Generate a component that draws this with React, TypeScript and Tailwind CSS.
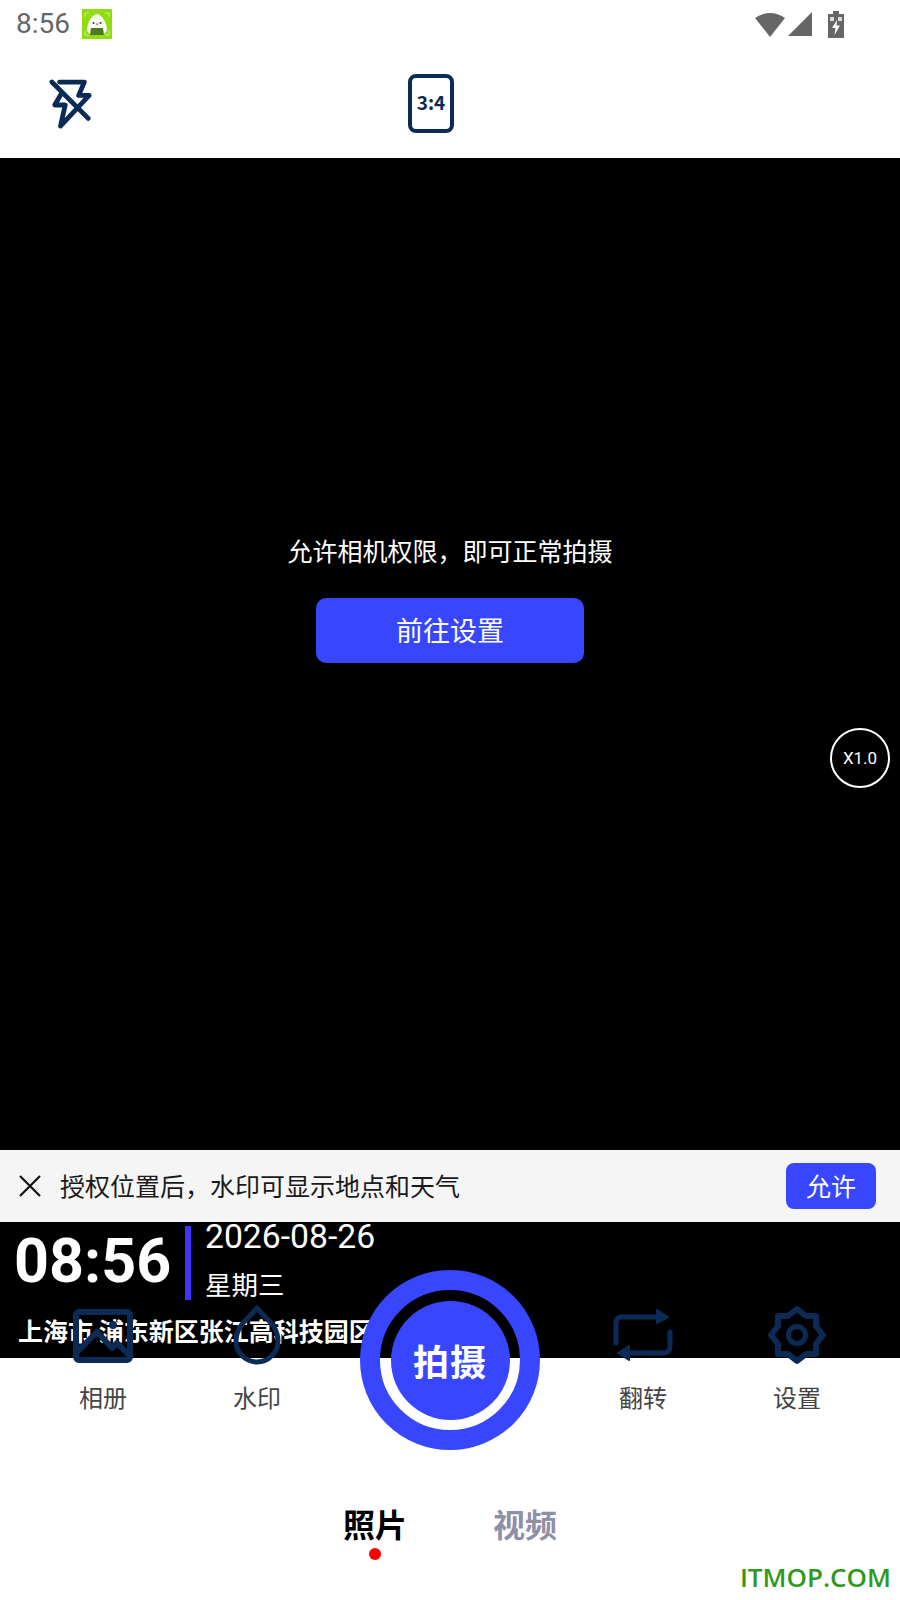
const NAVY = "#0b2a55";

function FlashOffIcon() {
  return (
    <svg width="44" height="52" viewBox="0 0 46 54" fill="none" stroke={NAVY} strokeWidth="5" strokeLinejoin="round" strokeLinecap="round">
      <path d="M11 3H37L31 17H42L12 49L17 27H6L13 15" />
      <path d="M3 3L41 41" />
    </svg>
  );
}

function AlbumIcon() {
  return (
    <svg width="60" height="60" viewBox="0 0 60 60" fill="none" stroke={NAVY} strokeWidth="6" strokeLinejoin="round">
      <rect x="3" y="7" width="54" height="48" rx="3" />
      <path d="M3 48L24 27L39 43L44 38L56 50" />
      <circle cx="40" cy="20" r="4" fill={NAVY} stroke="none" />
    </svg>
  );
}

function DropIcon() {
  return (
    <svg width="60" height="60" viewBox="0 0 60 60" fill="none" stroke={NAVY} strokeWidth="5" strokeLinejoin="round">
      <path d="M30 3C36 11 51 20 51 36A21 21 0 0 1 9 36C9 20 24 11 30 3Z" />
    </svg>
  );
}

function FlipIcon() {
  return (
    <svg width="60" height="60" viewBox="0 0 60 60" fill="none" stroke={NAVY} strokeWidth="5" strokeLinecap="round">
      <path d="M3 38V18Q3 12 9 12H44" />
      <path d="M57 27V41Q57 48 50 48H16" />
      <path d="M44 5L55 12L44 18Z" fill={NAVY} strokeWidth="2" strokeLinejoin="round" />
      <path d="M16 41L5 48L16 55Z" fill={NAVY} strokeWidth="2" strokeLinejoin="round" />
    </svg>
  );
}

function GearIcon() {
  return (
    <svg width="60" height="60" viewBox="0 0 60 60" fill="none" stroke={NAVY} strokeWidth="6" strokeLinejoin="round">
      <path d="M30 4L39 11H49V21L56 30L49 39V49H39L30 56L21 49H11V39L4 30L11 21V11H21Z" />
      <circle cx="30" cy="30" r="8.5" strokeWidth="5" />
    </svg>
  );
}

function AppIcon() {
  return (
    <svg width="30" height="30" viewBox="0 0 30 30">
      <rect width="30" height="30" fill="#8fdc10" />
      <path d="M3 8V4H7M23 4H27V8M3 22V26H7M23 26H27V22" fill="none" stroke="#d8f5a0" strokeWidth="0.8" />
      <path d="M15 5C20 5 25 15 25 20C25 25 20 26 15 26C10 26 5 25 5 20C5 15 10 5 15 5Z" fill="#fbfbf4" />
      <path d="M9 19H21L22 26H8Z" fill="#4f7a1c" />
      <circle cx="11.5" cy="14" r="1" fill="#333" />
      <circle cx="18.5" cy="14" r="1" fill="#333" />
      <path d="M13.5 14.5H16.5L15 16.5Z" fill="#e8503a" />
    </svg>
  );
}

function StatusIcons() {
  return (
    <div className="flex items-center">
      <svg width="32" height="26" viewBox="0 0 32 26" fill="#666666">
        <path d="M1 7Q16 -3 31 7L16 26Z" />
      </svg>
      <svg width="26" height="26" viewBox="0 0 26 26" fill="#666666" className="ml-[1px]">
        <path d="M1 25L25 1V25Z" />
      </svg>
      <svg width="18" height="27" viewBox="0 0 18 27" className="ml-[14px]">
        <path d="M6 0H12V3H17V27H1V3H6Z" fill="#666666" />
        <path d="M3 6H7V10H3ZM11 6H15V10H11Z" fill="#dddddd" />
        <path d="M10 9L5 17H8.5L7.5 24L13 14.5H9.5Z" fill="#ffffff" />
      </svg>
    </div>
  );
}

function ControlItem({ icon, label }: { icon: React.ReactNode; label: string }) {
  return (
    <div className="flex w-[100px] flex-col items-center">
      {icon}
      <span className="mt-[17px] text-[24px] leading-[30px] text-[#444444]">{label}</span>
    </div>
  );
}

export default function App() {
  return (
    <div className="relative flex h-[1600px] w-[900px] flex-col overflow-hidden bg-white font-['Roboto','Noto_Sans_CJK_SC',sans-serif]">
      <div className="flex h-[48px] items-center justify-between pl-[16px] pr-[55px]">
        <div className="flex items-center gap-[12px]">
          <span className="text-[28px] leading-none text-[#666666]">8:56</span>
          <AppIcon />
        </div>
        <StatusIcons />
      </div>

      <div className="flex h-[110px] items-start pl-[49px] pt-[31px]">
        <FlashOffIcon />
        <div className="ml-[315px] -mt-[5px] flex h-[59px] w-[46px] items-center justify-center rounded-[8px] border-[4px] border-[#0b2a55] pb-[3px]">
          <span className="text-[19px] font-bold text-[#0b2a55] font-['Noto_Sans_CJK_SC',sans-serif]">3:4</span>
        </div>
      </div>

      <div className="relative flex h-[992px] flex-col items-center justify-center bg-black pb-[112px] font-['Noto_Sans_CJK_SC',sans-serif]">
        <p className="-mt-[2px] text-[25px] leading-[36px] text-white">允许相机权限，即可正常拍摄</p>
        <button className="mt-[30px] h-[65px] w-[268px] rounded-[10px] bg-[#3847ff] text-[27px] leading-[60px] text-white">
          前往设置
        </button>
        <div className="absolute left-[830px] top-[570px] flex h-[60px] w-[60px] items-center justify-center rounded-full border-2 border-white pt-[1px] text-[17px] text-white font-['Roboto',sans-serif]">
          X1.0
        </div>
      </div>

      <div className="flex h-[72px] items-center bg-[#f5f5f5] pl-[19px] pr-[24px] font-['Noto_Sans_CJK_SC',sans-serif]">
        <svg width="22" height="22" viewBox="0 0 22 22" stroke="#111111" strokeWidth="2.2">
          <path d="M1 1L21 21M21 1L1 21" />
        </svg>
        <span className="ml-[19px] flex-1 text-[25px] text-[#1a1a1a]">授权位置后，水印可显示地点和天气</span>
        <button className="h-[46px] w-[90px] rounded-[8px] bg-[#3847ff] text-[25px] text-white">允许</button>
      </div>

      <div className="h-[136px] bg-black pl-[14px] text-white">
        <div className="flex h-[82px] items-start">
          <span className="mt-[3px] w-[171px] text-[61px] font-bold leading-[72px]">08:56</span>
          <div className="mt-[4px] h-[74px] w-[6px] bg-[#4033ff]" />
          <div className="ml-[14px] -mt-[4px] flex flex-col">
            <span className="text-[33.7px] leading-[38px]">2026-08-26</span>
            <span className="mt-[10px] text-[26.5px] leading-[36px] font-['Noto_Sans_CJK_SC',sans-serif]">星期三</span>
          </div>
        </div>
        <p className="pl-[4px] pt-[8px] text-[25px] font-bold leading-[36px] font-['Noto_Sans_CJK_SC',sans-serif]">
          上海市 浦东新区张江高科技园区
        </p>
      </div>

      <div className="relative flex-1 font-['Noto_Sans_CJK_SC',sans-serif]">
        <div className="relative -mt-[53px] flex pl-[53px]">
          <ControlItem icon={<AlbumIcon />} label="相册" />
          <div className="ml-[54px]">
            <ControlItem icon={<DropIcon />} label="水印" />
          </div>
          <div className="w-[286px]" />
          <ControlItem icon={<FlipIcon />} label="翻转" />
          <div className="ml-[54px]">
            <ControlItem icon={<GearIcon />} label="设置" />
          </div>
        </div>

        <div className="absolute -top-[88px] left-[360px] flex h-[180px] w-[180px] items-center justify-center rounded-full border-[20px] border-[#3847ff]">
          <div className="flex h-[119px] w-[119px] items-center justify-center rounded-full bg-[#3847ff] text-[36px] font-bold tracking-[1px] text-white">
            拍摄
          </div>
        </div>

        <div className="mt-[89px] flex justify-center gap-[86px]">
          <div className="flex w-[64px] flex-col items-center">
            <span className="text-[32px] font-bold leading-[44px] text-black">照片</span>
            <span className="mt-[3px] h-[12px] w-[12px] rounded-full bg-[#ff0000]" />
          </div>
          <span className="w-[64px] text-[32px] font-bold leading-[44px] text-[#8f8fa8]">视频</span>
        </div>

        <span className="absolute bottom-[6px] right-[9px] text-[26px] font-semibold leading-[34px] text-[#2d9a1b] font-['Open_Sans',sans-serif]">
          ITMOP.COM
        </span>
      </div>
    </div>
  );
}
